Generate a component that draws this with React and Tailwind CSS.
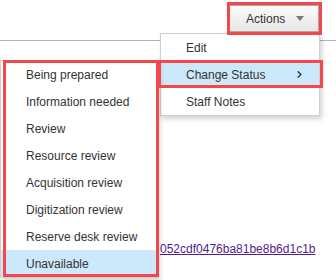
import { ChevronRight } from 'lucide-react';

const statuses = [
  'Being prepared',
  'Information needed',
  'Review',
  'Resource review',
  'Acquisition review',
  'Digitization review',
  'Reserve desk review',
  'Unavailable',
];

export default function App() {
  return (
    <div className="relative w-[336px] h-[280px] overflow-hidden bg-white text-[12px] text-[#333] font-['Liberation_Sans',Arial,sans-serif]">
      {/* header bar */}
      <div className="h-[41px] border-b border-[#b3b3b3] flex justify-end items-start pt-[5px] pr-[17px]">
        <button className="w-[90px] h-[27px] border border-[#a9a9a9] bg-gradient-to-b from-[#fbfbfb] to-[#e6e6e6] flex items-center pl-[16px] gap-[11px]">
          <span>Actions</span>
          <span className="w-0 h-0 border-l-[4px] border-r-[4px] border-t-[5px] border-l-transparent border-r-transparent border-t-[#777]" />
        </button>
      </div>

      <div className="pt-[201px] pl-[160px] leading-[14px]">
        <a href="#" className="text-[#551a8b] underline">052cdf0476ba81be8b6d1c1b</a>
      </div>

      {/* actions menu */}
      <div className="absolute left-[160px] top-[33px] w-[160px] bg-white border border-[#cfcfcf] shadow-[2px_3px_5px_rgba(0,0,0,0.18)]">
        <div className="h-[27px] flex items-center pl-[25px]">Edit</div>
        <div className="h-[27px] flex items-center pl-[25px] pr-[14px] justify-between bg-[#cce8fb]">
          <span>Change Status</span>
          <ChevronRight size={11} strokeWidth={3} className="text-[#333]" />
        </div>
        <div className="h-[27px] flex items-center pl-[25px]">Staff Notes</div>
      </div>

      {/* status submenu */}
      <div className="absolute left-0 top-[60px] w-[158px] bg-white border border-[#cfcfcf] shadow-[2px_3px_5px_rgba(0,0,0,0.18)]">
        {statuses.map((s, i) => (
          <div
            key={s}
            className={`h-[27px] flex items-center pl-[25px] ${i === statuses.length - 1 ? 'bg-[#cce8fb]' : ''}`}
          >
            {s}
          </div>
        ))}
      </div>

      {/* annotation outlines */}
      <div className="absolute left-[227px] top-[2px] w-[95px] h-[33px] border-[3px] border-[#f2474b]" />
      <div className="absolute left-[158px] top-[60px] w-[165px] h-[28px] border-[3px] border-[#f2474b]" />
      <div className="absolute left-[3px] top-[60px] w-[156px] h-[217px] border-[3px] border-[#f2474b]" />
    </div>
  );
}
